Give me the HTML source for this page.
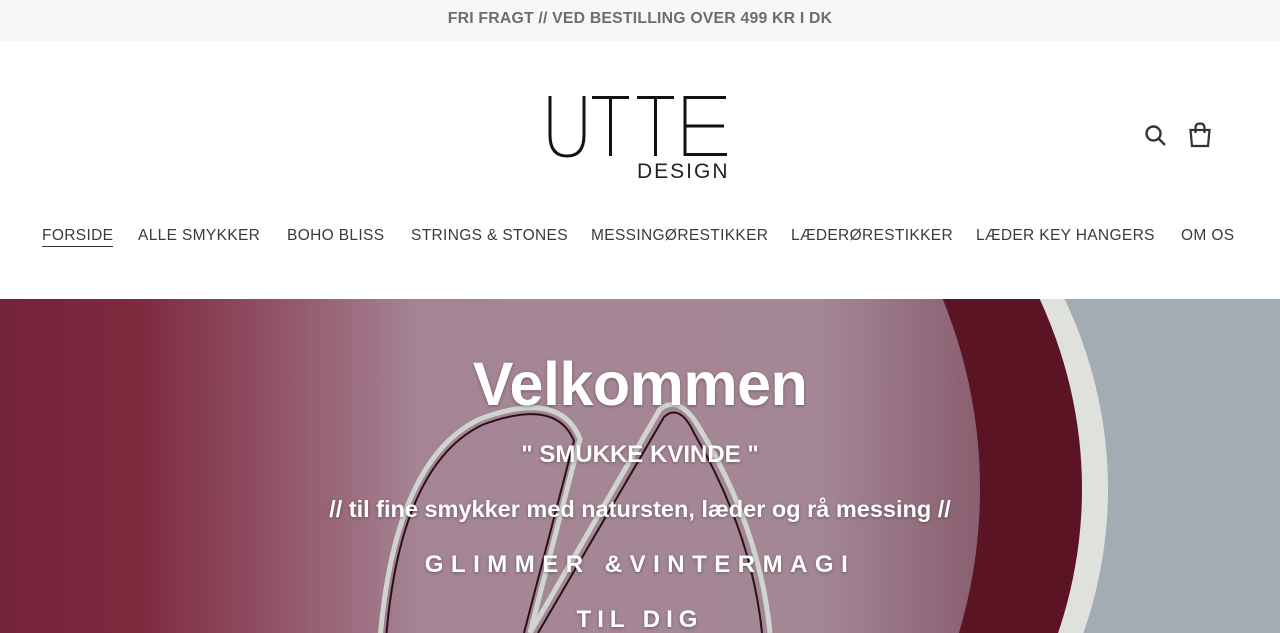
<!DOCTYPE html>
<html><head><meta charset="utf-8"><style>
*{margin:0;padding:0;box-sizing:border-box}
body{width:1280px;height:633px;overflow:hidden;font-family:"Liberation Sans",sans-serif;background:#fff;position:relative}
.ann{height:41px;background:#f7f7f7;color:#6d6d6d;font-size:15.8px;font-weight:bold;text-align:center;line-height:38px;letter-spacing:0.2px}
.hdr{position:absolute;top:41px;left:0;width:1280px;height:258px}
.logo{position:absolute;left:546px;top:49px;width:185px;height:92px}
.nav{position:absolute;top:186px;left:0;width:1280px;font-size:15.5px;color:#3a3a3a;letter-spacing:0.35px}
.nav span{position:absolute;white-space:nowrap}
.hero{position:absolute;top:299px;left:0;width:1280px;height:334px;overflow:hidden}
.t{position:absolute;left:0;width:1280px;text-align:center;color:#fff;font-weight:bold;text-shadow:0 1px 3px rgba(0,0,0,.35)}
</style></head><body>
<div class="ann">FRI FRAGT // VED BESTILLING OVER 499 KR I DK</div>
<div class="hdr">
<svg class="logo" viewBox="0 0 185 92">
<g fill="none" stroke="#111" stroke-width="3">
<path d="M4 6 V45 Q4 66 21 66 Q38 66 38 45 V6"/>
<path d="M46 7.5 H83 M64.5 7.5 V66"/>
<path d="M91 7.5 H128 M109.5 7.5 V66"/>
<path d="M180 7.5 H139 V64.5 H181 M139 36 H178"/>
</g>
<text x="91" y="88" font-family="Liberation Sans" font-size="21" fill="#222" letter-spacing="2">DESIGN</text>
</svg>
<svg style="position:absolute;left:1144px;top:83px" width="24" height="24" viewBox="0 0 24 24" fill="none" stroke="#333" stroke-width="2.4"><circle cx="9.5" cy="9.5" r="7"/><path d="M14.5 14.5 L21 21"/></svg>
<svg style="position:absolute;left:1188px;top:81px" width="24" height="26" viewBox="0 0 24 26" fill="none" stroke="#333" stroke-width="2.2"><path d="M2.5 8 H21.5 L20 24 H4 Z"/><path d="M7.5 11 V6 Q7.5 1.5 12 1.5 Q16.5 1.5 16.5 6 V11"/></svg>
<div class="nav">
<span style="left:42px;border-bottom:1px solid #333;padding-bottom:1px">FORSIDE</span>
<span style="left:138px">ALLE SMYKKER</span>
<span style="left:287px">BOHO BLISS</span>
<span style="left:411px">STRINGS &amp; STONES</span>
<span style="left:591px">MESSINGØRESTIKKER</span>
<span style="left:791px">LÆDERØRESTIKKER</span>
<span style="left:976px">LÆDER KEY HANGERS</span>
<span style="left:1181px">OM OS</span>
</div>
</div>
<div class="hero">
<svg width="1280" height="334" viewBox="0 0 1280 334" style="position:absolute;left:0;top:0">
<defs><linearGradient id="g" x1="0" x2="1"><stop offset="0" stop-color="#6e1f33"/><stop offset="0.22" stop-color="#7d2a3f"/><stop offset="0.36" stop-color="#93576b"/><stop offset="0.48" stop-color="#a58595"/><stop offset="0.85" stop-color="#a48795"/><stop offset="1" stop-color="#8a5f70"/></linearGradient></defs>
<rect width="1280" height="334" fill="#a4acb3"/>
<ellipse cx="480" cy="190" rx="628" ry="520" fill="#dfe2dc"/>
<ellipse cx="470" cy="190" rx="612" ry="520" fill="#5a1424"/>
<ellipse cx="440" cy="190" rx="540" ry="520" fill="url(#g)"/>
<g fill="none" stroke="#cfd4cf" stroke-width="5">
<path d="M380 340 Q395 160 480 120 Q560 90 580 140 L530 334"/>
<path d="M530 334 L660 110 Q680 95 700 130 Q760 230 770 334"/>
</g>
<g fill="none" stroke="#2a1018" stroke-width="2">
<path d="M386 340 Q400 166 482 126 Q556 98 574 142 L524 334"/>
<path d="M538 334 L664 118 Q680 104 694 134 Q752 234 762 334"/>
</g>
</svg>
<div class="t" style="top:50px;font-size:61px;letter-spacing:-0.5px">Velkommen</div>
<div class="t" style="top:142px;font-size:24px">" SMUKKE KVINDE "</div>
<div class="t" style="top:197px;font-size:23.5px">// til fine smykker med natursten, læder og rå messing //</div>
<div class="t" style="top:252px;font-size:24px;letter-spacing:7.5px">GLIMMER &amp;VINTERMAGI</div>
<div class="t" style="top:307px;font-size:24px;letter-spacing:6px">TIL DIG</div>
</div>
</body></html>
